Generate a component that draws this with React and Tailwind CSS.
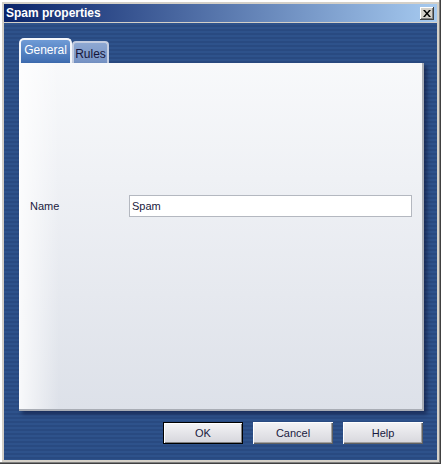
export default function App() {
  const font = { fontFamily: '"Liberation Sans", Arial, sans-serif' };
  return (
    <div
      className="w-[441px] h-[464px] bg-[#d4d0c8] p-[4px] flex flex-col gap-[1px] shadow-[inset_-1px_-1px_0_#404040,inset_-2px_-2px_0_#808080,inset_2px_2px_0_#ffffff]"
      style={font}
    >
      {/* Title bar */}
      <div className="h-[18px] shrink-0 flex items-center justify-between pl-[2px] pr-[3px] bg-[linear-gradient(to_right,#0a246a,#a6caf0)]">
        <span className="text-white font-bold text-[12px] leading-none">Spam properties</span>
        <div className="w-[14px] h-[13px] bg-[#d4d0c8] flex items-center justify-center shadow-[inset_-1px_-1px_0_#404040,inset_1px_1px_0_#ffffff,inset_-2px_-2px_0_#808080]">
          <svg width="8" height="7" viewBox="0 0 8 7">
            <path d="M0 0h2l2 2.5L6 0h2L5 3.5 8 7H6L4 4.5 2 7H0l3-3.5z" fill="#000" />
          </svg>
        </div>
      </div>
      {/* Body */}
      <div className="flex-1 flex flex-col pl-[15px] pr-[14px] pt-[15px] pb-[16px] bg-[repeating-linear-gradient(to_bottom,#2e528b_0px,#2e528b_2px,#294a81_2px,#294a81_4px)]">
        {/* Tabs */}
        <div className="flex items-end h-[25px] shrink-0">
          <div className="w-[53px] h-[25px] rounded-t-[5px] border-2 border-b-0 border-[#f4f6fa] bg-[linear-gradient(to_bottom,#6f9bd6,#3e6cb0)] flex items-center justify-center pb-[3px]">
            <span className="text-white text-[12px]">General</span>
          </div>
          <div className="w-[37px] h-[22px] rounded-t-[4px] border-2 border-b-0 border-[#c4cde0] bg-[linear-gradient(to_bottom,#8ea8d2,#7592c4)] flex items-center justify-center pt-[1px]">
            <span className="text-[#15153a] text-[12px]">Rules</span>
          </div>
        </div>
        {/* Panel */}
        <div className="w-[405px] h-[348px] shrink-0 flex flex-col pt-[132px] pl-[11px] border-r-[2px] border-b-[2px] border-[#a9adb5] bg-[linear-gradient(to_right,rgba(255,255,255,0.8),rgba(255,255,255,0)_40px),linear-gradient(to_bottom,#f8f9fb,#dde1e9)] shadow-[3px_3px_4px_rgba(0,0,30,0.45)]">
          <div className="flex items-center h-[22px]">
            <span className="w-[99px] text-[11px] text-[#1a1a40]">Name</span>
            <div className="w-[283px] h-[22px] bg-white border border-[#b4b8c0] flex items-center pl-[2px]">
              <span className="text-[11px] text-[#1a1a40]">Spam</span>
            </div>
          </div>
        </div>
        {/* Buttons */}
        <div className="flex justify-end gap-[10px] mt-[11px]">
          <button className="w-[80px] h-[22px] border border-black bg-[linear-gradient(to_bottom,#f4f4f6,#d6d6dc)] shadow-[inset_1px_1px_0_#ffffff,inset_-1px_-1px_0_#808080] text-[11px] text-[#1a1a40]">
            OK
          </button>
          <button className="w-[80px] h-[22px] bg-[linear-gradient(to_bottom,#f4f4f6,#d6d6dc)] shadow-[inset_1px_1px_0_#ffffff,inset_-1px_-1px_0_#606060,inset_-2px_-2px_0_#a0a0a0] text-[11px] text-[#1a1a40]">
            Cancel
          </button>
          <button className="w-[80px] h-[22px] bg-[linear-gradient(to_bottom,#f4f4f6,#d6d6dc)] shadow-[inset_1px_1px_0_#ffffff,inset_-1px_-1px_0_#606060,inset_-2px_-2px_0_#a0a0a0] text-[11px] text-[#1a1a40]">
            Help
          </button>
        </div>
      </div>
    </div>
  );
}
